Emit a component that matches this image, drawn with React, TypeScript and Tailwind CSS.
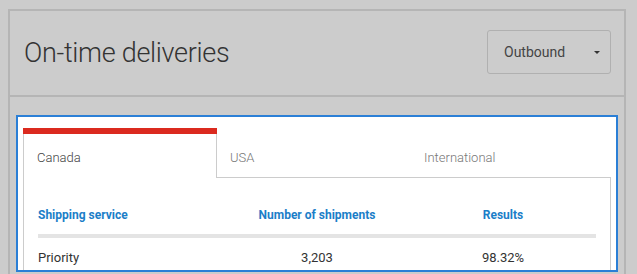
import React from "react";

export default function App() {
  return (
    <div className="min-h-screen bg-[#cccccc] pt-[9px] pl-[8px] pr-[11px]" style={{ fontFamily: "Roboto, 'Liberation Sans', sans-serif" }}>
      <div className="border-2 border-b-0 border-[#b5b5b5] h-[300px]">
        <div className="flex items-center justify-between h-[86px] pl-[14px] pr-[13px] border-b-2 border-[#b5b5b5]">
          <h1 className="text-[27px] font-light tracking-[-0.3px] text-[#333333] leading-none">On-time deliveries</h1>
          <button className="w-[124px] h-[44px] -mt-[2px] border border-[#b0b0b0] rounded-[3px] flex items-center justify-between pl-[16px] pr-[10px] text-[14px] text-[#444444]">
            <span>Outbound</span>
            <svg width="6" height="3" viewBox="0 0 6 3"><path d="M0 0H6L3 3Z" fill="#333" /></svg>
          </button>
        </div>
        <div className="pt-[18px] px-[6px]">
          <div className="h-[157px] border-2 border-[#2b7fd6] bg-white overflow-hidden pt-[11px] pl-[5px] pr-[5px]">
            <div className="flex h-[50px] text-[13px] font-light">
              <div className="w-[194px] bg-white border-t-[6px] border-[#db2a1f] relative">
                <div className="absolute left-0 top-0 bottom-0 border-l border-r border-[#cccccc] w-full"></div>
                <div className="pl-[14px] pt-[14px] text-[#444444]">Canada</div>
              </div>
              <div className="w-[194px] border-b border-[#cccccc] pl-[13px] pt-[20px] text-[#777777]">USA</div>
              <div className="flex-1 border-b border-[#cccccc] pl-[13px] pt-[20px] text-[#777777]">International</div>
            </div>
            <div className="border-l border-r border-[#cccccc] h-[120px] px-[14px] pt-[27px]">
              <div className="grid grid-cols-3 text-[12px] font-bold text-[#1b7ec8] leading-[20px]">
                <div>Shipping service</div>
                <div className="text-center">Number of shipments</div>
                <div className="text-center">Results</div>
              </div>
              <div className="h-[4px] bg-[#e4e4e4] mt-[9px]"></div>
              <div className="grid grid-cols-3 text-[13px] text-[#333333] leading-[20px] mt-[10px]">
                <div>Priority</div>
                <div className="text-center">3,203</div>
                <div className="text-center">98.32%</div>
              </div>
            </div>
          </div>
        </div>
      </div>
    </div>
  );
}
